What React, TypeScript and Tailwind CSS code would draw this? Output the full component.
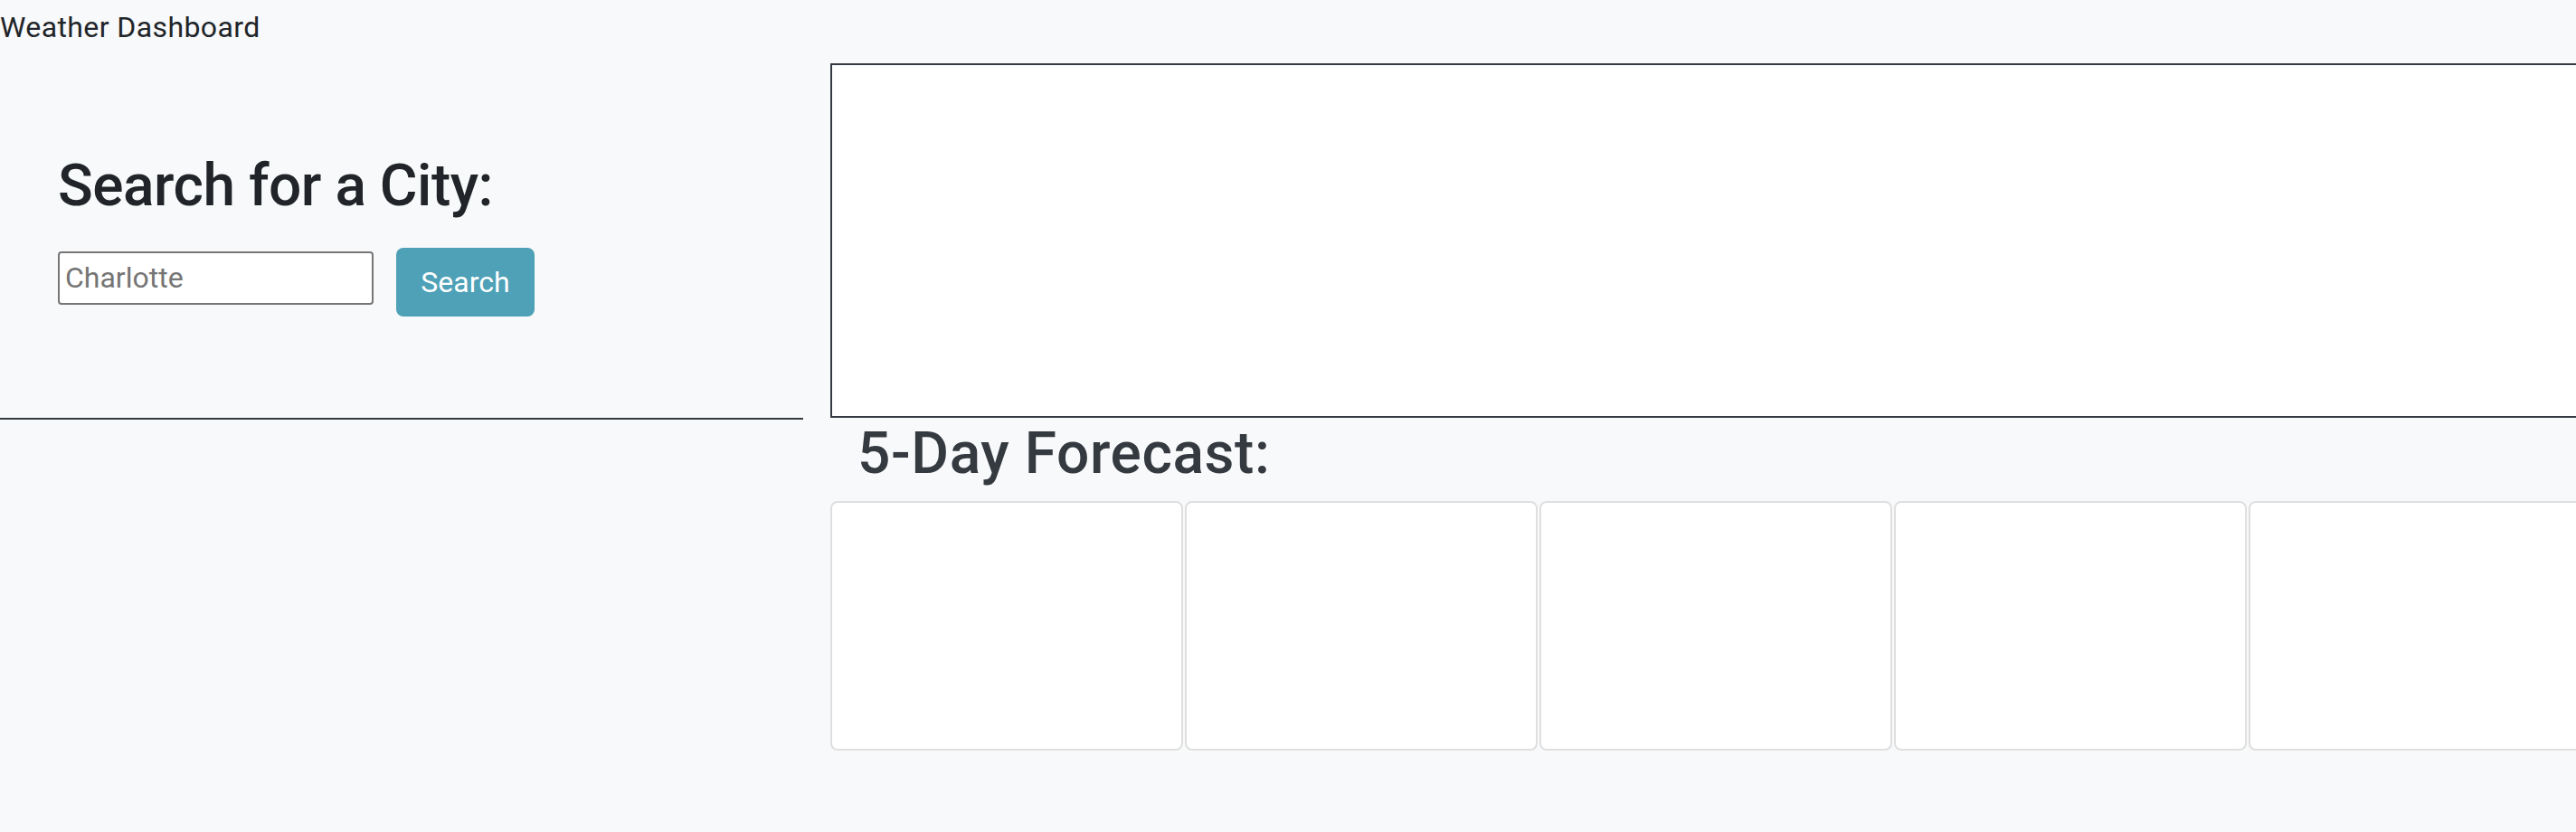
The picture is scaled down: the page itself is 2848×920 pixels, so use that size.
import React, { useState } from 'react';

const days = [1, 2, 3, 4, 5];

const App: React.FC = () => {
    const [city, setCity] = useState('');

    return (
        <div className="min-h-[920px] w-full overflow-hidden bg-[#f8f9fa] text-[#212529] font-['Roboto','Liberation_Sans',sans-serif]">
            <div className="h-[48px] pt-[6px] text-[32px] leading-[48px] tracking-[0.4px]">Weather Dashboard</div>

            <div className="flex items-start">
                {/* search column */}
                <div className="w-[888px] shrink-0 border-b-2 border-[#343a40] pl-[64px] pt-[120px] pb-[112px]">
                    <h2 className="mb-[29px] text-[64px] font-medium leading-[76.8px] tracking-[-0.5px]">Search for a City:</h2>
                    <form className="flex items-start" onSubmit={(e) => e.preventDefault()}>
                        <input
                            type="text"
                            value={city}
                            onChange={(e) => setCity(e.target.value)}
                            placeholder="Charlotte"
                            className="mt-[4px] h-[59px] w-[349px] rounded-[4px] border-2 border-[#767676] bg-white px-[6px] text-[32px] placeholder:text-[#757575] focus:outline-none"
                        />
                        <button
                            type="submit"
                            className="ml-[25px] flex h-[76px] w-[153px] items-center justify-center rounded-[8px] bg-[#4ea1b7] text-[32px] text-white"
                        >
                            Search
                        </button>
                    </form>
                </div>

                {/* current weather + forecast */}
                <div className="ml-[30px] flex w-[1960px] shrink-0 flex-col">
                    <div className="mt-[22px] h-[392px] border-2 border-[#343a40] bg-white"></div>
                    <h2 className="mt-[2px] pl-[30px] text-[64px] font-medium leading-[76.8px] tracking-[0.6px] text-[#343a40]">5-Day Forecast:</h2>
                    <div className="mt-[13px] flex gap-[2px]">
                        {days.map((d) => (
                            <div key={d} className="h-[276px] w-[390px] shrink-0 rounded-[8px] border-2 border-[#dfdfdf] bg-white"></div>
                        ))}
                    </div>
                </div>
            </div>
        </div>
    );
};

export default App;
